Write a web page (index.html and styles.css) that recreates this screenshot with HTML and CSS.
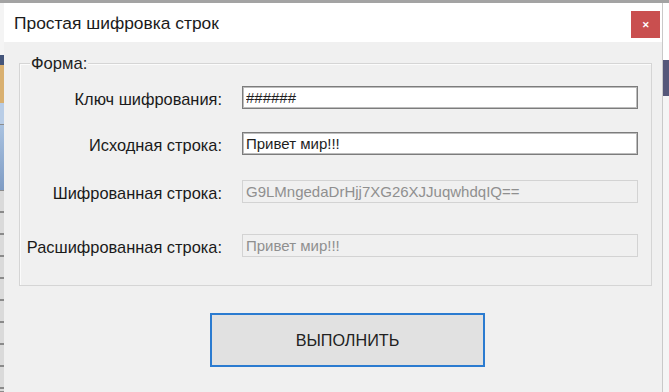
FILE: index.html
```html
<!DOCTYPE html>
<html lang="ru">
<head>
  <meta charset="UTF-8">
  <title>Простая шифровка строк</title>
  <link rel="stylesheet" href="styles.css">
</head>
<body>

<div class="top-edge"></div>
<div class="desk">
  <div class="behind-left">
    <div class="seg s1"></div>
    <div class="seg s2"></div>
    <div class="seg s3"></div>
    <div class="seg s4"></div>
    <div class="seg s5"></div>
    <div class="seg s6"></div>
  </div>

  <div class="window">
    <div class="titlebar">
      <span class="title">Простая шифровка строк</span>
      <button class="close-btn">&#x2715;</button>
    </div>

    <div class="client">
      <div class="group">
        <span class="group-title">Форма:</span>
        <div class="row">
          <label class="lbl">Ключ шифрования:</label>
          <input class="field" type="text" value="######">
        </div>
        <div class="row r2">
          <label class="lbl">Исходная строка:</label>
          <input class="field" type="text" value="Привет мир!!!">
        </div>
        <div class="row r3">
          <label class="lbl">Шифрованная строка:</label>
          <input class="field" type="text" value="G9LMngedaDrHjj7XG26XJJuqwhdqIQ==" disabled>
        </div>
        <div class="row r4">
          <label class="lbl">Расшифрованная строка:</label>
          <input class="field" type="text" value="Привет мир!!!" disabled>
        </div>
      </div>

      <button class="run-btn">ВЫПОЛНИТЬ</button>
    </div>
  </div>

  <div class="behind-right">
    <div class="rseg a"></div>
    <div class="rseg b"></div>
    <div class="rseg c"></div>
  </div>
</div>

</body>
</html>
```

FILE: styles.css
```css
* { box-sizing: border-box; }
body {
  margin: 0; padding: 0;
  width: 669px; height: 392px;
  overflow: hidden;
  font-family: "Liberation Sans", Arial, sans-serif;
  background: #d4d4d4;
}
.top-edge { height: 3px; background: #a3a3a3; }
.desk { display: flex; height: 389px; }

/* bits of other windows behind the dialog */
.behind-left { width: 4px; display: flex; flex-direction: column; }
.seg { border-bottom: 1px solid #8c8c8c; }
.s1 { height: 52px; background: #f4f4f4; border: none; }
.s2 { height: 10px; background: #44557a; border: none; }
.s3 { height: 38px; background: #d9b070; border: none; }
.s4 { height: 22px; background: #b9cde6; }
.s5 { height: 66px; background: linear-gradient(#a9c2e0, #7f9cc4); }
.s6 { flex: 1; background: repeating-linear-gradient(#dadada 0 20px, #8a8a8a 20px 22px); }

.behind-right { width: 7px; display: flex; flex-direction: column; border-left: 1px solid #c9c9c9; }
.rseg.a { height: 57px; background: #ffffff; }
.rseg.b { height: 36px; background: #56587a; }
.rseg.c { flex: 1; background: #f5f5f5; }

.window { flex: 1; display: flex; flex-direction: column; background: #f0f0f0; }
.titlebar {
  height: 39px; background: #ffffff;
  display: flex; align-items: center; justify-content: space-between;
  padding: 0 2px 0 10px;
}
.title { font-size: 17.4px; color: #1b1b1b; margin-top: 2px; }
.close-btn {
  align-self: flex-start;
  width: 29px; height: 27px; margin-top: 8px;
  background: #c94f4f; border: none; color: #fff;
  font-size: 9px; font-weight: bold; padding: 0;
}

.client { flex: 1; padding: 21px 10px 0 15px; }
.group {
  position: relative;
  border: 1px solid #d5d5d5;
  box-shadow: inset 1px 1px 0 #fbfbfb;
  padding: 22px 0 28px 0;
}
.group-title {
  position: absolute; top: -9px; left: 10px;
  background: #f0f0f0; padding: 0 1px;
  font-size: 16.6px; color: #1e1e1e; line-height: 18px;
}
.row { display: flex; align-items: center; height: 23px; }
.r2 { margin-top: 23px; }
.r3 { margin-top: 25px; }
.r4 { margin-top: 31px; }
.lbl {
  width: 202px; text-align: right; padding-top: 3px;
  font-size: 16.4px; color: #1a1a1a; white-space: nowrap;
}
.field {
  margin-left: 20px; width: 396px; height: 23px;
  border: 1px solid #7c7c7c;
  box-shadow: inset 0 0 0 1px #bdbdbd;
  background: #fff; padding: 0 3px;
  font: 15px "Liberation Sans", Arial, sans-serif; color: #1e1e1e;
}
.field:disabled {
  background: #f0f0f0; color: #8f8f8f;
  border-color: #d3d3d3; box-shadow: none;
}

.run-btn {
  display: block;
  margin: 27px 0 0 191px;
  width: 275px; height: 54px;
  background: #e1e1e1; border: 2px solid #2b7bd0;
  font: 16.2px "Liberation Sans", Arial, sans-serif; color: #222;
}
```
